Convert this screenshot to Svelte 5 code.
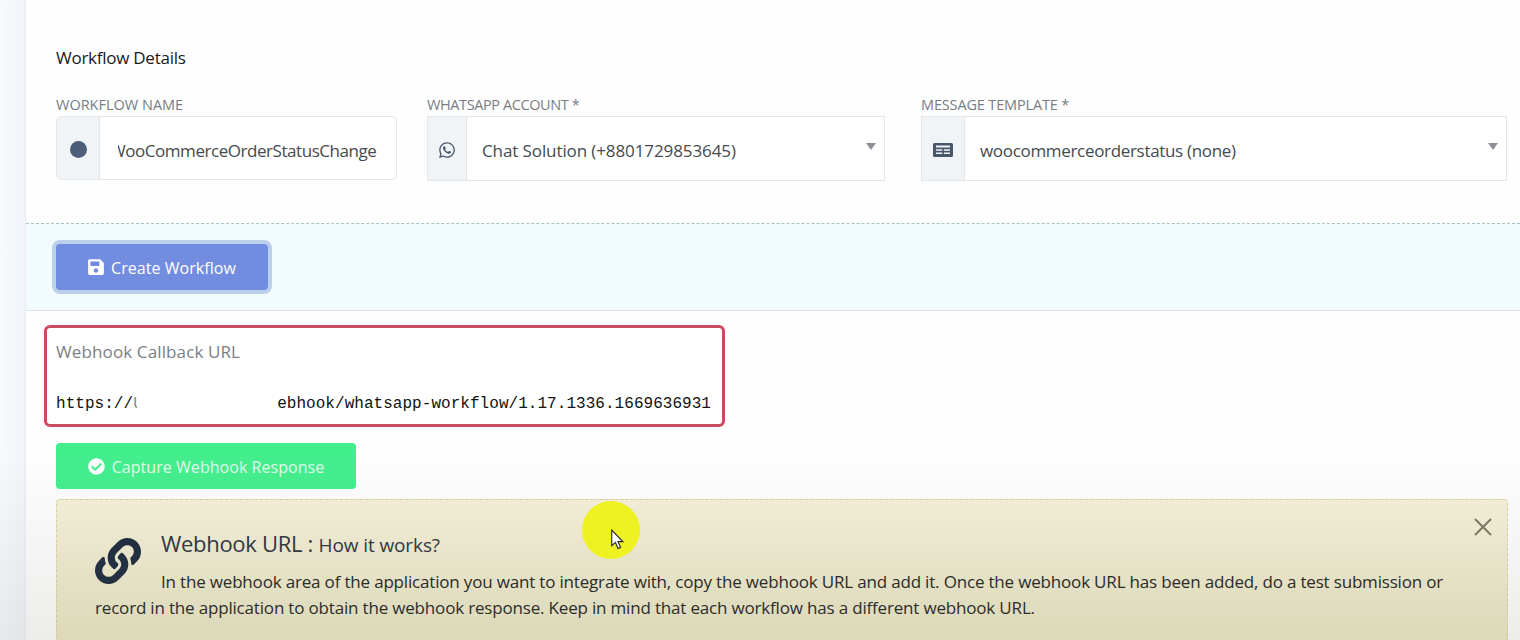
<script>
  const urlTail = 'ebhook/whatsapp-workflow/1.17.1336.1669636931';
</script>

<div class="page">
  <div class="rail"></div>
  <div class="main">
    <section class="details">
      <h2>Workflow Details</h2>
      <div class="fields">
        <div class="field name">
          <label for="wf-name">WORKFLOW NAME</label>
          <div class="group rounded">
            <span class="addon"><i class="dot"></i></span>
            <span class="value clip" id="wf-name"><span>WooCommerceOrderStatusChange</span></span>
          </div>
        </div>
        <div class="field account">
          <label for="wf-account">WHATSAPP ACCOUNT *</label>
          <div class="group">
            <span class="addon narrow">
              <svg viewBox="0 0 448 512" width="16" height="18"><path d="M380.9 97.1C339 55.1 283.2 32 223.9 32c-122.4 0-222 99.6-222 222 0 39.1 10.2 77.3 29.6 111L0 480l117.7-30.9c32.4 17.7 68.9 27 106.1 27h.1c122.3 0 224.1-99.6 224.1-222 0-59.3-25.2-115-67.1-157zm-157 341.6c-33.2 0-65.7-8.9-94-25.7l-6.7-4-69.8 18.3L72 359.2l-4.4-7c-18.5-29.4-28.2-63.3-28.2-98.2 0-101.7 82.8-184.5 184.6-184.5 49.3 0 95.6 19.2 130.4 54.1 34.8 34.9 56.2 81.2 56.1 130.5 0 101.8-84.9 184.6-186.6 184.6zm101.2-138.2c-5.5-2.8-32.8-16.2-37.9-18-5.1-1.9-8.8-2.8-12.5 2.8-3.7 5.6-14.3 18-17.6 21.8-3.2 3.7-6.5 4.2-12 1.4-32.6-16.3-54-29.1-75.5-66-5.7-9.8 5.7-9.1 16.3-30.3 1.8-3.7.9-6.9-.5-9.7-1.4-2.8-12.5-30.1-17.1-41.2-4.5-10.8-9.1-9.3-12.5-9.5-3.2-.2-6.9-.2-10.6-.2-3.7 0-9.7 1.4-14.8 6.9-5.1 5.6-19.4 19-19.4 46.3 0 27.3 19.9 53.7 22.6 57.4 2.8 3.7 39.1 59.7 94.8 83.8 35.2 15.2 49 16.5 66.6 13.9 10.7-1.6 32.8-13.4 37.4-26.4 4.6-13 4.6-24.1 3.2-26.4-1.3-2.5-5-3.9-10.5-6.6z"/></svg>
            </span>
            <span class="value" id="wf-account">Chat Solution (+8801729853645)</span>
            <i class="caret"></i>
          </div>
        </div>
        <div class="field template">
          <label for="wf-template">MESSAGE TEMPLATE *</label>
          <div class="group">
            <span class="addon">
              <svg viewBox="0 0 20 14" width="20" height="14"><path fill-rule="evenodd" d="M1.500 0h17A1.500 1.500 0 0 1 20 1.500v11a1.500 1.500 0 0 1-1.500 1.500h-17A1.500 1.500 0 0 1 0 12.500v-11A1.500 1.500 0 0 1 1.500 0zM3 2.500v2h14v-2zM3 6.300v1.400h6.200V6.300zm7.800 0v1.400H17V6.300zM3 9.500v1.400h6.200V9.500zm7.800 0v1.400H17V9.500z"/></svg>
            </span>
            <span class="value" id="wf-template">woocommerceorderstatus (none)</span>
            <i class="caret"></i>
          </div>
        </div>
      </div>
    </section>

    <section class="actions">
      <button class="btn primary">
        <svg viewBox="0 0 448 512" width="16" height="18"><path d="M433.941 129.941l-83.882-83.882A48 48 0 0 0 316.118 32H48C21.49 32 0 53.49 0 80v352c0 26.51 21.49 48 48 48h352c26.51 0 48-21.49 48-48V163.882a48 48 0 0 0-14.059-33.941zM224 416c-35.346 0-64-28.654-64-64 0-35.346 28.654-64 64-64s64 28.654 64 64c0 35.346-28.654 64-64 64zm96-304.520V212c0 6.627-5.373 12-12 12H76c-6.627 0-12-5.373-12-12V108c0-6.627 5.373-12 12-12h228.520c3.183 0 6.235 1.264 8.485 3.515l3.480 3.480A11.996 11.996 0 0 1 320 111.480z"/></svg>
        <span>Create Workflow</span>
      </button>
    </section>

    <section class="webhook">
      <div class="callback">
        <div class="callback-title">Webhook Callback URL</div>
        <div class="callback-url">https://<span class="cut">U</span><span class="tail">{urlTail}</span></div>
      </div>

      <button class="btn capture">
        <svg viewBox="0 0 512 512" width="17" height="17"><path d="M504 256c0 136.967-111.033 248-248 248S8 392.967 8 256 119.033 8 256 8s248 111.033 248 248zM227.314 387.314l184-184c6.248-6.248 6.248-16.379 0-22.627l-22.627-22.627c-6.248-6.249-16.379-6.250-22.628 0L216 308.118l-70.059-70.059c-6.248-6.248-16.379-6.248-22.628 0l-22.627 22.627c-6.248 6.248-6.248 16.379 0 22.627l104 104c6.249 6.250 16.379 6.250 22.628.001z"/></svg>
        <span>Capture Webhook Response</span>
      </button>

      <div class="alert">
        <svg class="link" viewBox="0 0 512 512" width="46" height="46"><path d="M326.612 185.391c59.747 59.809 58.927 155.698.36 214.590-.11.12-.24.25-.36.37l-67.2 67.2c-59.27 59.27-155.699 59.262-214.960 0-59.27-59.260-59.27-155.700 0-214.960l37.106-37.106c9.84-9.84 26.786-3.3 27.294 10.606.648 17.722 3.826 35.527 9.69 52.721 1.986 5.822.567 12.262-3.783 16.612l-13.087 13.087c-28.026 28.026-28.905 73.660-1.155 101.960 28.024 28.579 74.086 28.749 102.325.51l67.2-67.190c28.191-28.191 28.073-73.757 0-101.830-3.701-3.694-7.429-6.564-10.341-8.569a16.037 16.037 0 0 1-6.947-12.606c-.396-10.567 3.348-21.456 11.698-29.806l21.054-21.055c5.521-5.521 14.182-6.199 20.584-1.731a152.482 152.482 0 0 1 20.522 17.197zM467.547 44.449c-59.261-59.262-155.690-59.270-214.960 0l-67.2 67.2c-.12.12-.25.25-.36.37-58.566 58.892-59.387 154.781.36 214.590a152.454 152.454 0 0 0 20.521 17.196c6.402 4.468 15.064 3.789 20.584-1.731l21.054-21.055c8.35-8.35 12.094-19.239 11.698-29.806a16.037 16.037 0 0 0-6.947-12.606c-2.912-2.005-6.64-4.875-10.341-8.569-28.073-28.073-28.191-73.639 0-101.830l67.2-67.190c28.239-28.239 74.3-28.069 102.325.51 27.75 28.3 26.872 73.934-1.155 101.960l-13.087 13.087c-4.35 4.35-5.769 10.79-3.783 16.612 5.864 17.194 9.042 34.999 9.69 52.721.509 13.906 17.454 20.446 27.294 10.606l37.106-37.106c59.271-59.259 59.271-155.699.001-214.959z"/></svg>
        <button class="close" aria-label="Close">
          <svg viewBox="0 0 18 18" width="18" height="18"><path d="M1 1l16 16M17 1L1 17"/></svg>
        </button>
        <h3>Webhook URL : <small>How it works?</small></h3>
        <p>In the webhook area of the application you want to integrate with, copy the webhook URL and add it. Once the webhook URL has been added, do a test submission or record in the application to obtain the webhook response. Keep in mind that each workflow has a different webhook URL.</p>
      </div>
    </section>
  </div>

  <div class="fade"></div>
  <div class="spot">
    <svg viewBox="0 0 12 20" width="14" height="21"><path d="M1 1v15l3.500-3.200 2.500 5.700 2.400-1-2.500-5.500H11.500z"/></svg>
  </div>
</div>

<style>
  :global(body) {
    margin: 0;
    background: #fff;
  }
  .page {
    position: relative;
    display: flex;
    width: 1520px;
    height: 640px;
    overflow: hidden;
    font-family: "Open Sans", "Noto Sans", sans-serif;
    color: #212529;
  }
  .rail {
    width: 26px;
    flex: none;
    background: linear-gradient(90deg, #f8fafd, #f1f4f9);
    box-shadow: inset -1px 0 1px #e9ecf1;
  }
  .main {
    flex: 1;
    min-width: 0;
    background: #fefefe;
  }

  .details {
    height: 224px;
    box-sizing: border-box;
    padding: 47px 13px 0 30px;
    border-bottom: 1px dashed #a9c0c8;
  }
  h2 {
    margin: 0 0 26px;
    font-size: 17px;
    line-height: 21px;
    font-weight: 400;
    letter-spacing: -0.26px;
    color: #1a1a1a;
  }
  .fields {
    display: flex;
  }
  .field label {
    display: block;
    height: 20px;
    padding-top: 2px;
    font-size: 14.5px;
    line-height: 17px;
    color: #777d83;
  }
  .name { width: 341px; margin-right: 30px; }
  .account { width: 458px; margin-right: 36px; }
  .template { width: 586px; }
  .account label { letter-spacing: -0.4px; }
  .template label { letter-spacing: -0.15px; }
  .group {
    position: relative;
    display: flex;
    align-items: center;
    height: 65px;
    box-sizing: border-box;
    border: 1px solid #e4e7ea;
    background: #fff;
  }
  .rounded {
    height: 64px;
    border-radius: 5px;
    overflow: hidden;
  }
  .addon {
    display: flex;
    align-items: center;
    justify-content: center;
    align-self: stretch;
    width: 42px;
    flex: none;
    background: #f1f4f7;
    border-right: 1px solid #e4e7ea;
  }
  .addon.narrow { width: 38px; }
  .addon svg,
  .dot {
    position: relative;
    top: 1.500px;
  }
  .addon svg { fill: #47566b; }
  .dot {
    width: 17px;
    height: 17px;
    border-radius: 50%;
    background: #4d5f78;
  }
  .value {
    padding: 4px 0 0 15px;
    font-size: 17px;
    color: #444a50;
    white-space: nowrap;
  }
  #wf-account { letter-spacing: -0.1px; }
  #wf-template { letter-spacing: -0.32px; }
  .clip {
    width: 279px;
    padding-left: 0;
    margin-left: 18px;
    overflow: hidden;
    letter-spacing: -0.45px;
  }
  .clip span {
    display: block;
    margin-left: -8px;
  }
  .caret {
    position: absolute;
    right: 8px;
    top: 26px;
    border: 5.500px solid transparent;
    border-top: 7px solid #8d9197;
    border-bottom: 0;
  }

  .actions {
    height: 87px;
    box-sizing: border-box;
    padding: 20px 0 0 30px;
    background: #f2fbfe;
    border-bottom: 1px solid #e2e5e7;
  }
  .btn {
    display: flex;
    align-items: center;
    justify-content: center;
    gap: 7px;
    height: 46px;
    padding: 0;
    border: 0;
    border-radius: 4px;
    font: inherit;
    font-size: 16px;
    letter-spacing: 0.05px;
    color: #fff;
  }
  .btn span {
    position: relative;
    top: 1px;
  }
  .btn svg { fill: #fff; }
  .primary {
    width: 212px;
    background: #728ce0;
    box-shadow: 0 0 0 4px #bcd0ec;
  }

  .webhook {
    padding: 14px 12px 0 30px;
  }
  .callback {
    width: 681px;
    height: 102px;
    box-sizing: border-box;
    margin-left: -12px;
    padding: 13px 0 0 9px;
    border: 3px solid #ca4a62;
    border-radius: 6px;
    background: #fff;
  }
  .callback-title {
    font-size: 17px;
    line-height: 22px;
    letter-spacing: 0.12px;
    color: #7a8086;
  }
  .callback-url {
    margin-top: 31px;
    display: flex;
    font-family: "Liberation Mono", monospace;
    font-size: 16px;
    line-height: 20px;
    letter-spacing: 0.04px;
    color: #111;
    white-space: pre;
  }
  .cut {
    width: 4px;
    overflow: hidden;
    color: #888;
  }
  .tail { margin-left: 140px; }

  .capture {
    width: 300px;
    margin-top: 16px;
    background: #43ee8d;
    color: #e0fcec;
  }

  .alert {
    position: relative;
    width: 1452px;
    height: 180px;
    box-sizing: border-box;
    margin-top: 10px;
    padding: 29px 38px 0;
    border: 1px dashed #dcd3a0;
    border-radius: 4px;
    background: linear-gradient(180deg, #f5f0d9, #ebe7c4 140px);
  }
  .link {
    float: left;
    margin: 9px 20px 0 0;
    fill: #1b2a3d;
  }
  .close {
    position: absolute;
    right: 15px;
    top: 18px;
    padding: 0;
    border: 0;
    background: none;
  }
  .close svg {
    display: block;
    fill: none;
    stroke: #7d7564;
    stroke-width: 2;
  }
  h3 {
    margin: 0 0 10px;
    font-size: 22px;
    line-height: 28px;
    font-weight: 400;
    letter-spacing: -0.3px;
    color: #2c3440;
  }
  h3 small {
    font-size: 19px;
    letter-spacing: -0.1px;
  }
  p {
    margin: 0;
    font-size: 17px;
    line-height: 26px;
    letter-spacing: -0.18px;
    color: #22241f;
  }

  .fade {
    position: absolute;
    left: 0;
    right: 0;
    bottom: 0;
    height: 190px;
    background: linear-gradient(180deg, rgba(120, 120, 110, 0), rgba(120, 120, 110, 0.13));
    pointer-events: none;
  }
  .spot {
    position: absolute;
    left: 582px;
    top: 501px;
    width: 58px;
    height: 58px;
    border-radius: 50%;
    background: #eef221;
  }
  .spot svg {
    position: absolute;
    left: 28px;
    top: 28px;
    fill: #fff;
    stroke: #2a2a2a;
    stroke-width: 1.100;
  }
</style>
